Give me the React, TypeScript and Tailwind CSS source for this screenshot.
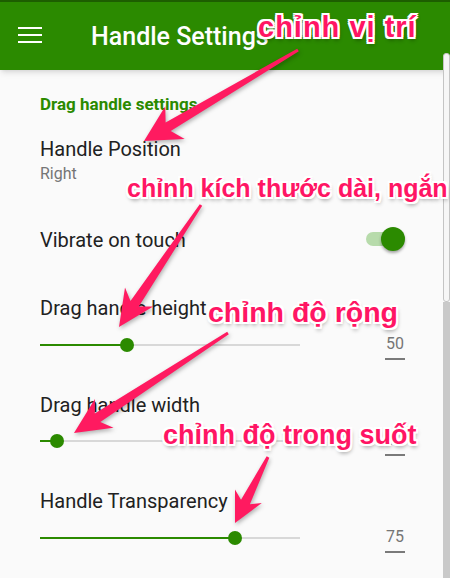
import React from "react";

const SETTINGS_GREEN = "#2b8a00";

// white outline + soft drop shadow like the screenshot annotations
const NOTE_CLASS =
  "absolute whitespace-nowrap font-['Liberation_Sans',Arial,sans-serif] font-bold leading-none text-[#ff1564] [text-shadow:-2px_-2px_0_#fff,2px_-2px_0_#fff,-2px_2px_0_#fff,2px_2px_0_#fff,0_-2px_0_#fff,0_2px_0_#fff,-2px_0_0_#fff,2px_0_0_#fff,1px_3px_4px_rgba(0,0,0,0.45)]";

interface ArrowSpec {
  sx: number;
  sy: number;
  tx: number;
  ty: number;
  head: number;
  half: number;
}

const arrows: ArrowSpec[] = [
  { sx: 298, sy: 50, tx: 144, ty: 141, head: 36, half: 19 },
  { sx: 201, sy: 205, tx: 119, ty: 327, head: 36, half: 17 },
  { sx: 228, sy: 333, tx: 74, ty: 433, head: 36, half: 17 },
  { sx: 268, sy: 457, tx: 235, ty: 523, head: 30, half: 15 },
];

function arrowPoints(a: ArrowSpec) {
  const dx = a.tx - a.sx;
  const dy = a.ty - a.sy;
  const len = Math.hypot(dx, dy);
  const ux = dx / len;
  const uy = dy / len;
  const nx = -uy;
  const ny = ux;
  // wings sit at the head base, the shaft joins a little in front of them
  const bx = a.tx - ux * a.head;
  const by = a.ty - uy * a.head;
  const jx = a.tx - ux * a.head * 0.78;
  const jy = a.ty - uy * a.head * 0.78;
  const pts: [number, number][] = [
    [a.sx + nx * 1.5, a.sy + ny * 1.5],
    [jx + nx * 5, jy + ny * 5],
    [bx + nx * a.half, by + ny * a.half],
    [a.tx, a.ty],
    [bx - nx * a.half, by - ny * a.half],
    [jx - nx * 5, jy - ny * 5],
    [a.sx - nx * 1.5, a.sy - ny * 1.5],
  ];
  return pts.map(([x, y]) => `${x.toFixed(1)},${y.toFixed(1)}`).join(" ");
}

function SliderPref({ title, value, percent }: { title: string; value: string; percent: number }) {
  return (
    <div>
      <div className="text-[20px] leading-[24px] text-[#212121]">{title}</div>
      <div className="mt-[13.5px] flex h-[26px] items-start">
        <div className="relative mt-[4px] h-[14px] w-[260px]">
          <div className="absolute left-0 right-0 top-[6px] h-[2px] bg-[#d8d8d8]" />
          <div
            className="absolute left-0 top-[6px] h-[2px] bg-[#2b8a00]"
            style={{ width: `${percent}%` }}
          />
          <div
            className="absolute top-0 h-[14px] w-[14px] -translate-x-1/2 rounded-full bg-[#2b8a00]"
            style={{ left: `${percent}%` }}
          />
        </div>
        <div className="ml-auto mr-[5px] w-[20px] border-b-2 border-[#7a7a7a] pb-[4px] text-center text-[16px] leading-[20px] text-[#757575]">
          {value}
        </div>
      </div>
    </div>
  );
}

export default function App() {
  return (
    <div className="relative h-[578px] w-[450px] overflow-hidden bg-[#fafafa] font-['Roboto',sans-serif]">
      {/* App bar */}
      <header className="relative z-10 flex h-[70px] items-start border-t-2 border-[#1d5e00] bg-[#2b8a00] shadow-md">
        <div className="ml-[18px] mt-[25px] flex h-[16px] w-[24px] flex-col justify-between">
          <span className="h-[2px] w-full bg-white" />
          <span className="h-[2px] w-full bg-white" />
          <span className="h-[2px] w-full bg-white" />
        </div>
        <h1 className="ml-[49px] mt-[18.5px] text-[25px] font-medium leading-[32px] text-white">Handle Settings</h1>
      </header>

      {/* Preferences */}
      <main className="px-10 pt-[24px]">
        <div className="text-[17px] font-bold leading-[20px]" style={{ color: SETTINGS_GREEN }}>
          Drag handle settings
        </div>

        <div className="mt-[23px] text-[20px] leading-[24px] text-[#212121]">Handle Position</div>
        <div className="mt-[3px] text-[16px] leading-[20px] text-[#757575]">Right</div>

        <div className="mt-[34.5px] flex h-[40px] items-center justify-between">
          <span className="pt-[3px] text-[20px] leading-[24px] text-[#212121]">Vibrate on touch</span>
          <div className="relative mr-[5px] h-[24px] w-[39px]">
            <div className="absolute left-0 top-[5px] h-[14px] w-[34px] rounded-full bg-[#b7dbab]" />
            <div className="absolute right-0 top-0 h-[24px] w-[24px] rounded-full bg-[#2b8a00] shadow-[0_2px_3px_rgba(0,0,0,0.35)]" />
          </div>
        </div>

        <div className="mt-[37.5px] flex flex-col gap-[33px]">
          <SliderPref title="Drag handle height" value="50" percent={33.3} />
          <SliderPref title="Drag handle width" value="10" percent={6.5} />
          <SliderPref title="Handle Transparency" value="75" percent={75} />
        </div>
      </main>

      {/* Scrollbar at the right edge */}
      <div className="absolute bottom-0 right-0 top-[53px] z-20 flex w-[7px] flex-col">
        <div className="h-[249px] rounded-[3px] border border-[#c4c4c4] bg-[#f6f6f6]" />
        <div className="flex-1 bg-[#c9c9c9]" />
      </div>

      {/* Annotation layer */}
      <svg className="pointer-events-none absolute inset-0 z-30" width="450" height="578" viewBox="0 0 450 578">
        {arrows.map((a, i) => (
          <polygon
            key={i}
            points={arrowPoints(a)}
            fill="#ff1a60"
            style={{ filter: "drop-shadow(1px 2px 2px rgba(0,0,0,0.3))" }}
          />
        ))}
      </svg>
      <div className="pointer-events-none absolute inset-0 z-40">
        <span className={`${NOTE_CLASS} left-[258px] top-[13px] text-[29px] tracking-[1px]`}>chỉnh vị trí</span>
        <span className={`${NOTE_CLASS} left-[127px] top-[176px] text-[25px]`}>chỉnh kích thước dài, ngắn</span>
        <span className={`${NOTE_CLASS} left-[208px] top-[298px] text-[28.5px]`}>chỉnh độ rộng</span>
        <span className={`${NOTE_CLASS} left-[163px] top-[422px] text-[27px]`}>chỉnh độ trong suốt</span>
      </div>
    </div>
  );
}
